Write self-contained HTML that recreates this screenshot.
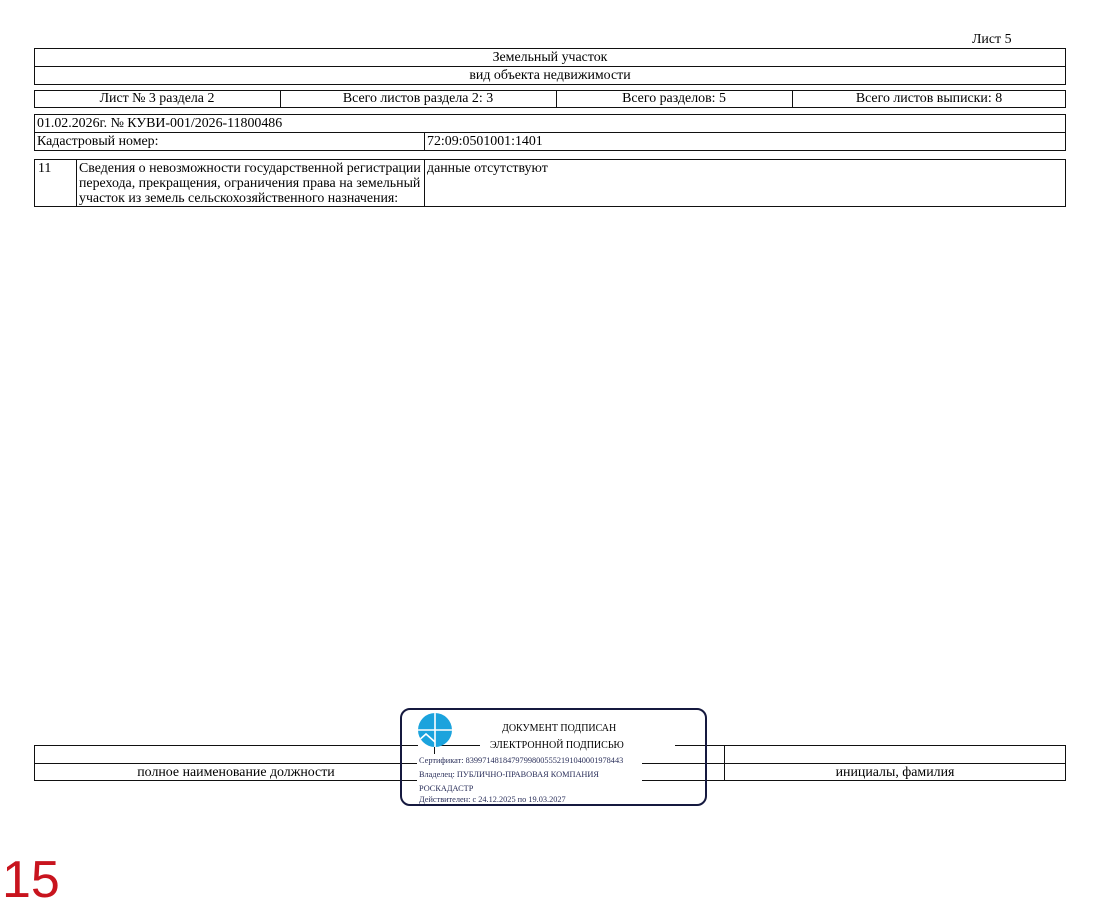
<!DOCTYPE html>
<html><head><meta charset="utf-8"><style>
*{margin:0;padding:0;box-sizing:border-box}
body{width:1100px;height:910px;background:#fff;position:relative;overflow:hidden;font-family:"Liberation Serif",serif;font-size:13.9px;color:#000}
.a{position:absolute}
.b{position:absolute;border:1px solid #111}
.h{position:absolute;height:1px;background:#111}
.v{position:absolute;width:1px;background:#111}
.t{position:absolute;white-space:nowrap;line-height:15px}
.c{text-align:center}
.s{font-size:8.3px;color:#2a2f5a}
</style></head><body>
<div class="t" style="left:972px;top:32px">Лист 5</div>

<div class="b" style="left:34px;top:48px;width:1032px;height:37px"></div>
<div class="h" style="left:34px;top:66px;width:1032px"></div>
<div class="t c" style="left:34px;top:50px;width:1032px">Земельный участок</div>
<div class="t c" style="left:34px;top:68px;width:1032px">вид объекта недвижимости</div>

<div class="b" style="left:34px;top:90px;width:1032px;height:18px"></div>
<div class="v" style="left:280px;top:90px;height:18px"></div>
<div class="v" style="left:556px;top:90px;height:18px"></div>
<div class="v" style="left:792px;top:90px;height:18px"></div>
<div class="t c" style="left:34px;top:91px;width:346px;left:34px;width:246px">Лист № 3 раздела 2</div>
<div class="t c" style="left:280px;top:91px;width:276px">Всего листов раздела 2: 3</div>
<div class="t c" style="left:556px;top:91px;width:236px">Всего разделов: 5</div>
<div class="t c" style="left:792px;top:91px;width:274px">Всего листов выписки: 8</div>

<div class="b" style="left:34px;top:114px;width:1032px;height:37px"></div>
<div class="h" style="left:34px;top:132px;width:1032px"></div>
<div class="v" style="left:424px;top:132px;height:19px"></div>
<div class="t" style="left:37px;top:116px">01.02.2026г. № КУВИ-001/2026-11800486</div>
<div class="t" style="left:37px;top:134px">Кадастровый номер:</div>
<div class="t" style="left:427px;top:134px">72:09:0501001:1401</div>

<div class="b" style="left:34px;top:159px;width:1032px;height:48px"></div>
<div class="v" style="left:76px;top:159px;height:48px"></div>
<div class="v" style="left:424px;top:159px;height:48px"></div>
<div class="t" style="left:38px;top:161px">11</div>
<div class="t" style="left:79px;top:161px">Сведения о невозможности государственной регистрации<br>перехода, прекращения, ограничения права на земельный<br>участок из земель сельскохозяйственного назначения:</div>
<div class="t" style="left:427px;top:161px">данные отсутствуют</div>

<div class="h" style="left:34px;top:745px;width:1032px"></div>
<div class="h" style="left:34px;top:763px;width:1032px"></div>
<div class="h" style="left:34px;top:780px;width:1032px"></div>
<div class="v" style="left:34px;top:745px;height:36px"></div>
<div class="v" style="left:1065px;top:745px;height:36px"></div>
<div class="v" style="left:724px;top:745px;height:36px"></div>
<div class="t c" style="left:34px;top:765px;width:404px">полное наименование должности</div>
<div class="t c" style="left:724px;top:765px;width:342px">инициалы, фамилия</div>

<div class="a" style="left:400px;top:708px;width:307px;height:98px;background:#fff;border:2.5px solid #15193f;border-radius:10px"></div>
<div class="h" style="left:402px;top:745px;width:16px"></div>
<div class="h" style="left:436px;top:745px;width:44px"></div>
<div class="h" style="left:675px;top:745px;width:30px"></div>
<div class="h" style="left:402px;top:763px;width:15px"></div>
<div class="h" style="left:642px;top:763px;width:63px"></div>
<div class="h" style="left:402px;top:780px;width:15px"></div>
<div class="h" style="left:642px;top:780px;width:63px"></div>
<div class="v" style="left:434px;top:745px;height:9px"></div>
<svg class="a" style="left:417px;top:712px" width="36" height="36" viewBox="0 0 36 36">
<defs><clipPath id="cp"><circle cx="18" cy="18" r="17"/></clipPath></defs>
<circle cx="18" cy="18" r="17" fill="#1ba3dd"/>
<g clip-path="url(#cp)" stroke="#fff" stroke-width="1.6" fill="none">
<line x1="18" y1="0" x2="18" y2="36"/>
<line x1="0" y1="18" x2="36" y2="18"/>
<polyline points="0,30 9,22 18,30"/>
</g></svg>
<div class="t" style="left:502px;top:721px;font-size:10px">ДОКУМЕНТ ПОДПИСАН</div>
<div class="t" style="left:490px;top:738px;font-size:10px">ЭЛЕКТРОННОЙ ПОДПИСЬЮ</div>
<div class="t s" style="left:419px;top:753px">Сертификат: 83997148184797998005552191040001978443</div>
<div class="t s" style="left:419px;top:767px">Владелец: ПУБЛИЧНО-ПРАВОВАЯ КОМПАНИЯ</div>
<div class="t s" style="left:419px;top:781px">РОСКАДАСТР</div>
<div class="t s" style="left:419px;top:792px">Действителен: с 24.12.2025 по 19.03.2027</div>

<div class="t" style="left:2px;top:852px;font-family:'Liberation Sans',sans-serif;font-size:52px;line-height:56px;color:#c8141e">15</div>
</body></html>
